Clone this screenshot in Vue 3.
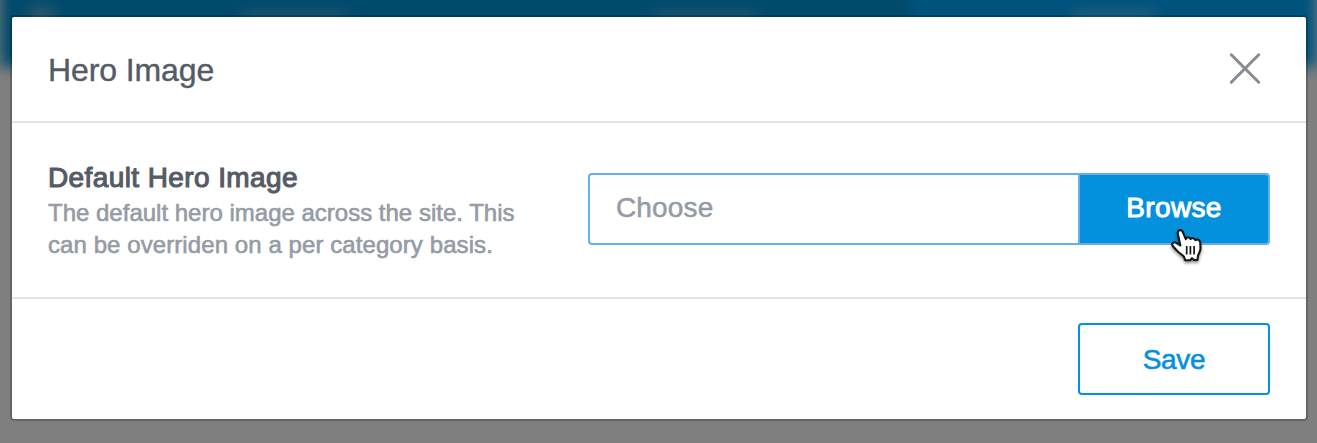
<script setup>
import { ref } from 'vue'

const tabs = [
  { id: 1, active: false },
  { id: 2, active: false },
  { id: 3, active: true },
]
const file = ref('Choose')
</script>

<template>
  <div class="page">
    <div class="backdrop" aria-hidden="true">
      <div class="nav">
        <i class="logo"></i>
        <div v-for="tab in tabs" :key="tab.id" class="tab" :class="{ active: tab.active }"><i></i></div>
      </div>
    </div>
    <section class="modal" role="dialog" aria-labelledby="title">
      <header class="head">
        <h1 id="title">Hero Image</h1>
        <button class="close" aria-label="Close">
          <svg width="32" height="32" viewBox="0 0 32 32">
            <path d="M2.3 2.8 29.7 30.2M29.7 2.8 2.3 30.2" fill="none" stroke="#868b92" stroke-width="3" stroke-linecap="round" />
          </svg>
        </button>
      </header>
      <div class="body">
        <div class="info">
          <h2>Default Hero Image</h2>
          <p>The default hero image across the site. This<br /><span class="wide">can be overriden on a per category basis.</span></p>
        </div>
        <div class="picker">
          <span class="value">{{ file }}</span>
          <button class="browse"><span>Browse</span></button>
          <svg class="cursor" width="38" height="42" viewBox="0 0 38 42">
            <path
              d="M9.4 5C10.4 3.6 12.8 3.8 13.7 5.8L16.8 13.2C17 11 20.6 10.8 21.6 13C22.6 11.6 25.6 11.8 26.4 14.2C28 12.8 30.8 13.8 31.2 16.4L31.5 22C31.6 25 30 27 29 29.6L28.5 34H25L23 32.2L21.2 34.2H16.2L15 30.8C12.6 28 9.6 26.8 7.6 24.2L3.9 20.2C1.9 17.4 4.6 15.4 7.2 16.8L11.4 19.4L8.9 8.2C8.6 6.8 8.7 5.8 9.4 5Z"
              fill="#fff" stroke="#161616" stroke-width="2.1" stroke-linejoin="round"
            />
            <path d="M17.7 20v8.4M21.4 20v8.4M25.1 20v8.4" stroke="#161616" stroke-width="1.7" fill="none" />
          </svg>
        </div>
      </div>
      <footer class="foot">
        <button class="save"><span>Save</span></button>
      </footer>
    </section>
  </div>
</template>

<style>
body {
  margin: 0;
  overflow: hidden;
}
</style>

<style scoped>
* {
  box-sizing: border-box;
}
.page {
  position: relative;
  width: 1317px;
  height: 443px;
  padding: 17px 11px 24px 12px;
  overflow: hidden;
  background: #7f7f7f;
  font-family: 'Liberation Sans', Arial, sans-serif;
}
.backdrop {
  position: absolute;
  inset: 0;
}
.nav {
  position: absolute;
  left: 0;
  top: -30px;
  width: 1317px;
  height: 97px;
  display: flex;
  padding-left: 89px;
  background: #004a6c;
  filter: blur(7px);
}
.logo {
  position: absolute;
  left: 30px;
  top: 36px;
  width: 24px;
  height: 24px;
  background: #2c586d;
}
.tab {
  flex: 0 0 411px;
  display: flex;
  justify-content: center;
  align-items: flex-start;
  padding-top: 41px;
}
.tab i {
  width: 105px;
  height: 14px;
  background: #1b5474;
}
.tab.active {
  flex: 0 1 406px;
  background: #00537d;
}
.tab.active i {
  width: 80px;
  background: #245f80;
}
.modal {
  position: relative;
  height: 402px;
  background: #fff;
  border-radius: 2px;
  box-shadow: 0 0 0 2px rgba(0, 0, 0, 0.2);
}
.head {
  height: 106px;
  display: flex;
  align-items: center;
  justify-content: space-between;
  padding: 0 45px 2px 36px;
  border-bottom: 2px solid #e4e4e4;
}
h1 {
  margin: 4px 0 0;
  font-size: 32px;
  line-height: 36px;
  font-weight: 400;
  letter-spacing: -0.1px;
  color: #555b65;
  -webkit-text-stroke: 0.4px currentColor;
}
button {
  font: inherit;
  padding: 0;
  cursor: pointer;
}
.close {
  height: 32px;
  border: 0;
  background: none;
}
.close svg {
  display: block;
}
.body {
  height: 176px;
  display: flex;
  justify-content: space-between;
  padding: 36px 36px 0;
  border-bottom: 2px solid #e4e4e4;
}
.info {
  white-space: nowrap;
}
h2 {
  margin: 1px 0;
  font-size: 28px;
  line-height: 36px;
  font-weight: 400;
  letter-spacing: 0.4px;
  color: #555b65;
  -webkit-text-stroke: 1.1px currentColor;
}
p {
  margin: 0;
  font-size: 24px;
  line-height: 32px;
  color: #949ba5;
  -webkit-text-stroke: 0.6px currentColor;
}
.wide {
  letter-spacing: 0.08px;
}
.picker {
  position: relative;
  width: 682px;
  height: 72px;
  margin-top: 14px;
  display: flex;
  border: 2px solid #68aee8;
  border-radius: 4px;
  font-size: 28px;
}
.value {
  flex: 1;
  padding-left: 26px;
  line-height: 65px;
  letter-spacing: 0.15px;
  color: #949ba5;
  -webkit-text-stroke: 0.5px currentColor;
}
.browse {
  width: 190px;
  border: 0;
  border-left: 2px solid #68aee8;
  border-radius: 0 2px 2px 0;
  background: #0391de;
  color: #fff;
  line-height: 65px;
  letter-spacing: 0.35px;
  -webkit-text-stroke: 1px currentColor;
}
.browse span {
  display: block;
  height: 68px;
}
.cursor {
  position: absolute;
  left: 579px;
  top: 51px;
  filter: drop-shadow(0 2px 1.5px rgba(0, 0, 0, 0.45));
}
.foot {
  display: flex;
  justify-content: flex-end;
  padding: 24px 36px;
}
.save {
  width: 192px;
  height: 72px;
  border: 2px solid #0391de;
  border-radius: 4px;
  background: #fff;
  color: #0391de;
  font-size: 28px;
  letter-spacing: -0.35px;
  -webkit-text-stroke: 0.6px currentColor;
}
.save span {
  display: block;
  padding-top: 2px;
}
</style>
